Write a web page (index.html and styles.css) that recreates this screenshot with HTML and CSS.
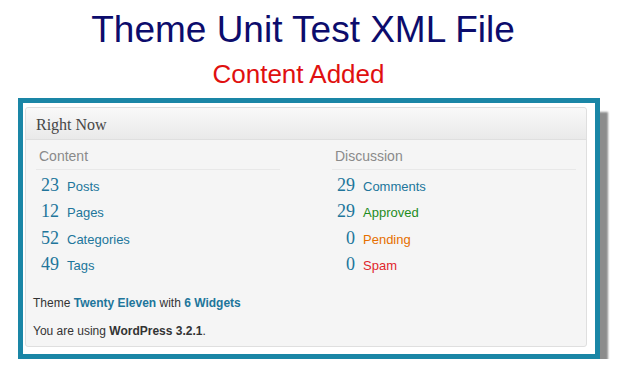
FILE: index.html
```html
<!DOCTYPE html>
<html lang="en">
<head>
    <meta charset="UTF-8">
    <title>Theme Unit Test XML File</title>
    <link rel="stylesheet" href="styles.css">
</head>
<body>
    <h1 class="title">Theme Unit Test XML File</h1>
    <h2 class="subtitle">Content Added</h2>

    <div class="frame">
        <div class="widget">
            <h3 class="hndle">Right Now</h3>
            <div class="inside">
                <div class="columns">
                    <div class="col">
                        <p class="sub">Content</p>
                        <div class="rows">
                            <div class="row"><span class="num">23</span><span class="label">Posts</span></div>
                            <div class="row"><span class="num">12</span><span class="label">Pages</span></div>
                            <div class="row"><span class="num">52</span><span class="label">Categories</span></div>
                            <div class="row"><span class="num">49</span><span class="label">Tags</span></div>
                        </div>
                    </div>
                    <div class="col">
                        <p class="sub">Discussion</p>
                        <div class="rows">
                            <div class="row"><span class="num">29</span><span class="label">Comments</span></div>
                            <div class="row"><span class="num">29</span><span class="label approved">Approved</span></div>
                            <div class="row"><span class="num">0</span><span class="label waiting">Pending</span></div>
                            <div class="row"><span class="num">0</span><span class="label spam">Spam</span></div>
                        </div>
                    </div>
                </div>
                <p class="note first">Theme <a href="#">Twenty Eleven</a> with <a href="#">6 Widgets</a></p>
                <p class="note">You are using <b>WordPress 3.2.1</b>.</p>
            </div>
        </div>
    </div>
</body>
</html>
```

FILE: styles.css
```css
body {
    margin: 0;
    background-color: white;
    font-family: "Liberation Sans", Arial, sans-serif;
}

.title {
    margin: 8px 15px 0 0;
    font-size: 37px;
    line-height: 44px;
    font-weight: normal;
    text-align: center;
    color: #0c0c6c;
}

.subtitle {
    margin: 7px 24px 0 0;
    font-size: 26px;
    line-height: 30px;
    font-weight: normal;
    text-align: center;
    color: #e01010;
}

.frame {
    width: 562px;
    margin: 9px 0 0 18px;
    padding: 4px 8px 7px 2px;
    border: 5px solid #1a86a6;
    background-color: white;
    box-shadow: 8px 14px 2px #8c8c8c;
}

.widget {
    border: 1px solid #dfdfdf;
    border-radius: 3px;
    background-color: #f5f5f5;
}

.hndle {
    margin: 0;
    padding: 2px 10px 0;
    line-height: 29px;
    font-family: "Liberation Serif", Georgia, serif;
    font-size: 16px;
    font-weight: normal;
    color: #464646;
    background: linear-gradient(#f9f9f9, #e9e9e9);
    border-bottom: 1px solid #dfdfdf;
    border-radius: 3px 3px 0 0;
}

.inside {
    padding: 6px 10px 6px 7px;
}

.columns {
    display: grid;
    grid-template-columns: 244px 244px;
    justify-content: space-between;
    padding-left: 3px;
}

.sub {
    margin: 0;
    padding: 0 0 3px 3px;
    font-size: 14px;
    line-height: 20px;
    color: #8a8a8a;
    border-bottom: 1px solid #e8e8e8;
}

.rows {
    padding-top: 2px;
}

.row {
    display: flex;
    align-items: baseline;
    gap: 8px;
    height: 26.33px;
}

.num {
    width: 23px;
    text-align: right;
    font-family: "Liberation Serif", Georgia, serif;
    font-size: 18px;
    line-height: 26px;
    font-variant-numeric: oldstyle-nums;
    color: #21759b;
}

.label {
    font-size: 13px;
    line-height: 26px;
    color: #21759b;
}

.label.approved {
    color: #1e8c1e;
}

.label.waiting {
    color: #e66f00;
}

.label.spam {
    color: #e0262c;
}

.note {
    margin: 10px 0 0;
    font-size: 12px;
    line-height: 18px;
    color: #333;
}

.note.first {
    margin-top: 17px;
}

.note a {
    font-weight: bold;
    color: #21759b;
    text-decoration: none;
}
```
